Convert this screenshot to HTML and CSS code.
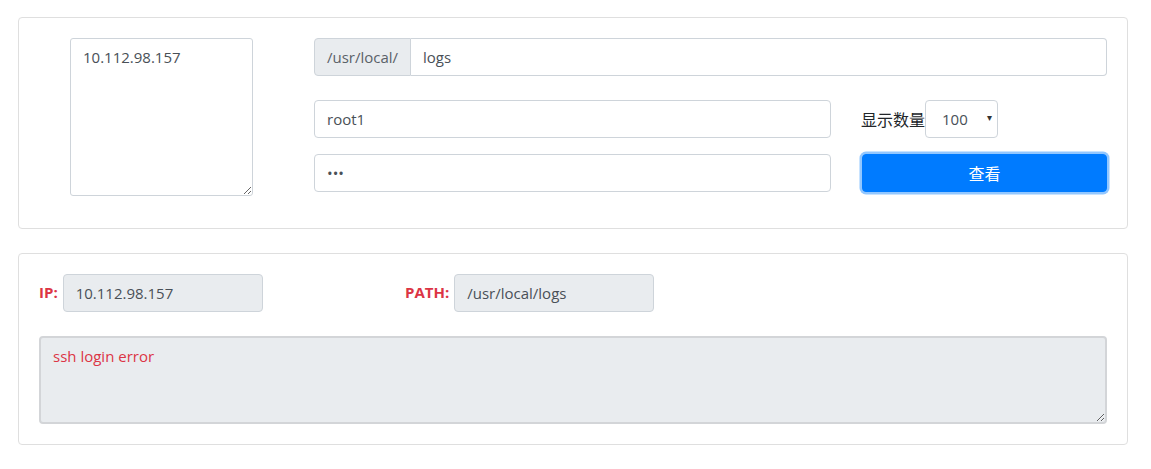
FILE: index.html
```html
<!DOCTYPE html>
<html lang="zh">
<head>
<meta charset="utf-8">
<link rel="stylesheet" href="styles.css">
</head>
<body>
<div class="page">
  <div class="card card-top">
    <div class="col-ip">
      <textarea class="ip-area">10.112.98.157</textarea>
    </div>
    <div class="col-form">
      <div class="input-group">
        <span class="prepend">/usr/local/</span>
        <input class="ctl ctl-join" type="text" value="logs">
      </div>
      <div class="form-grid">
        <input class="ctl" type="text" value="root1">
        <div class="count">
          <span class="count-label">显示数量</span>
          <div class="select">100<span class="caret">▾</span></div>
        </div>
        <input class="ctl" type="password" value="abc">
        <button class="btn">查看</button>
      </div>
    </div>
  </div>

  <div class="card card-bottom">
    <div class="info-row">
      <div class="info">
        <span class="info-label">IP:</span>
        <div class="ctl ctl-disabled">10.112.98.157</div>
      </div>
      <div class="info">
        <span class="info-label">PATH:</span>
        <div class="ctl ctl-disabled">/usr/local/logs</div>
      </div>
      <div></div>
    </div>
    <textarea class="result" readonly>ssh login error</textarea>
  </div>
</div>
</body>
</html>
```

FILE: styles.css
```css
* { box-sizing: border-box; }
html, body { margin: 0; background: #fff; }
body {
  font-family: "Open Sans", "Noto Sans", "Noto Sans CJK SC", sans-serif;
  font-size: 15px;
  color: #212529;
}
.page {
  width: 1110px;
  margin: 17px 0 0 18px;
  display: flex;
  flex-direction: column;
  gap: 24px;
}
.card {
  border: 1px solid #dfdfdf;
  border-radius: 4px;
  background: #fff;
}
.card-top {
  display: flex;
  padding: 20px 20px 32px 20px;
}
.col-ip {
  width: 277px;
  display: flex;
  justify-content: flex-start;
  padding-left: 31px;
}
.ip-area {
  width: 183px;
  height: 158px;
  border: 1px solid #ced4da;
  border-radius: 3px;
  padding: 8px 12px;
  font: inherit;
  color: #495057;
  resize: vertical;
}
.col-form {
  flex: 1;
}
.input-group {
  display: flex;
  height: 38px;
  margin-bottom: 24px;
}
.prepend {
  width: 97px;
  background: #e9ecef;
  border: 1px solid #ced4da;
  border-radius: 4px 0 0 4px;
  color: #5a6168;
  display: flex;
  align-items: center;
  padding: 0 12px;
  white-space: nowrap;
}
.ctl {
  height: 38px;
  border: 1px solid #ced4da;
  border-radius: 4px;
  padding: 0 12px;
  font: inherit;
  color: #495057;
  background: #fff;
  outline: none;
  display: flex;
  align-items: center;
}
.ctl-join {
  flex: 1;
  border-left: none;
  border-radius: 0 4px 4px 0;
}
.form-grid {
  display: grid;
  grid-template-columns: 517px 246px;
  column-gap: 30px;
  row-gap: 16px;
  align-items: center;
}
.form-grid .ctl { width: 517px; }
.count {
  display: flex;
  align-items: center;
}
.count-label { font-size: 16px; }
.select {
  width: 73px;
  height: 38px;
  border: 1px solid #ced4da;
  border-radius: 4px;
  display: flex;
  align-items: center;
  padding: 0 0 0 16px;
  color: #495057;
  position: relative;
}
.caret {
  position: absolute;
  right: 5px;
  top: 9px;
  font-size: 10px;
  color: #333;
}
.btn {
  height: 38px;
  width: 245px;
  background: #007bff;
  border: 1px solid #007bff;
  border-radius: 4px;
  color: #fff;
  font: inherit;
  font-size: 16px;
  box-shadow: 0 0 0 2.5px rgba(38, 143, 255, .5);
  margin-left: 1px;
}
.card-bottom {
  padding: 20px;
}
.info-row {
  display: grid;
  grid-template-columns: 366px 366px 1fr;
  margin-bottom: 24px;
}
.info {
  display: flex;
  align-items: center;
  gap: 5px;
}
.info-label {
  color: #dc3545;
  font-weight: 700;
  font-size: 15px;
  margin-top: -2px;
}
.ctl-disabled {
  width: 200px;
  background: #e9ecef;
}
.result {
  display: block;
  width: 1068px;
  height: 88px;
  background: #e9ecef;
  border: 2px solid #d3d5d8;
  border-radius: 4px;
  color: #dc3545;
  font: inherit;
  padding: 8px 12px;
  resize: vertical;
  outline: none;
}
```
